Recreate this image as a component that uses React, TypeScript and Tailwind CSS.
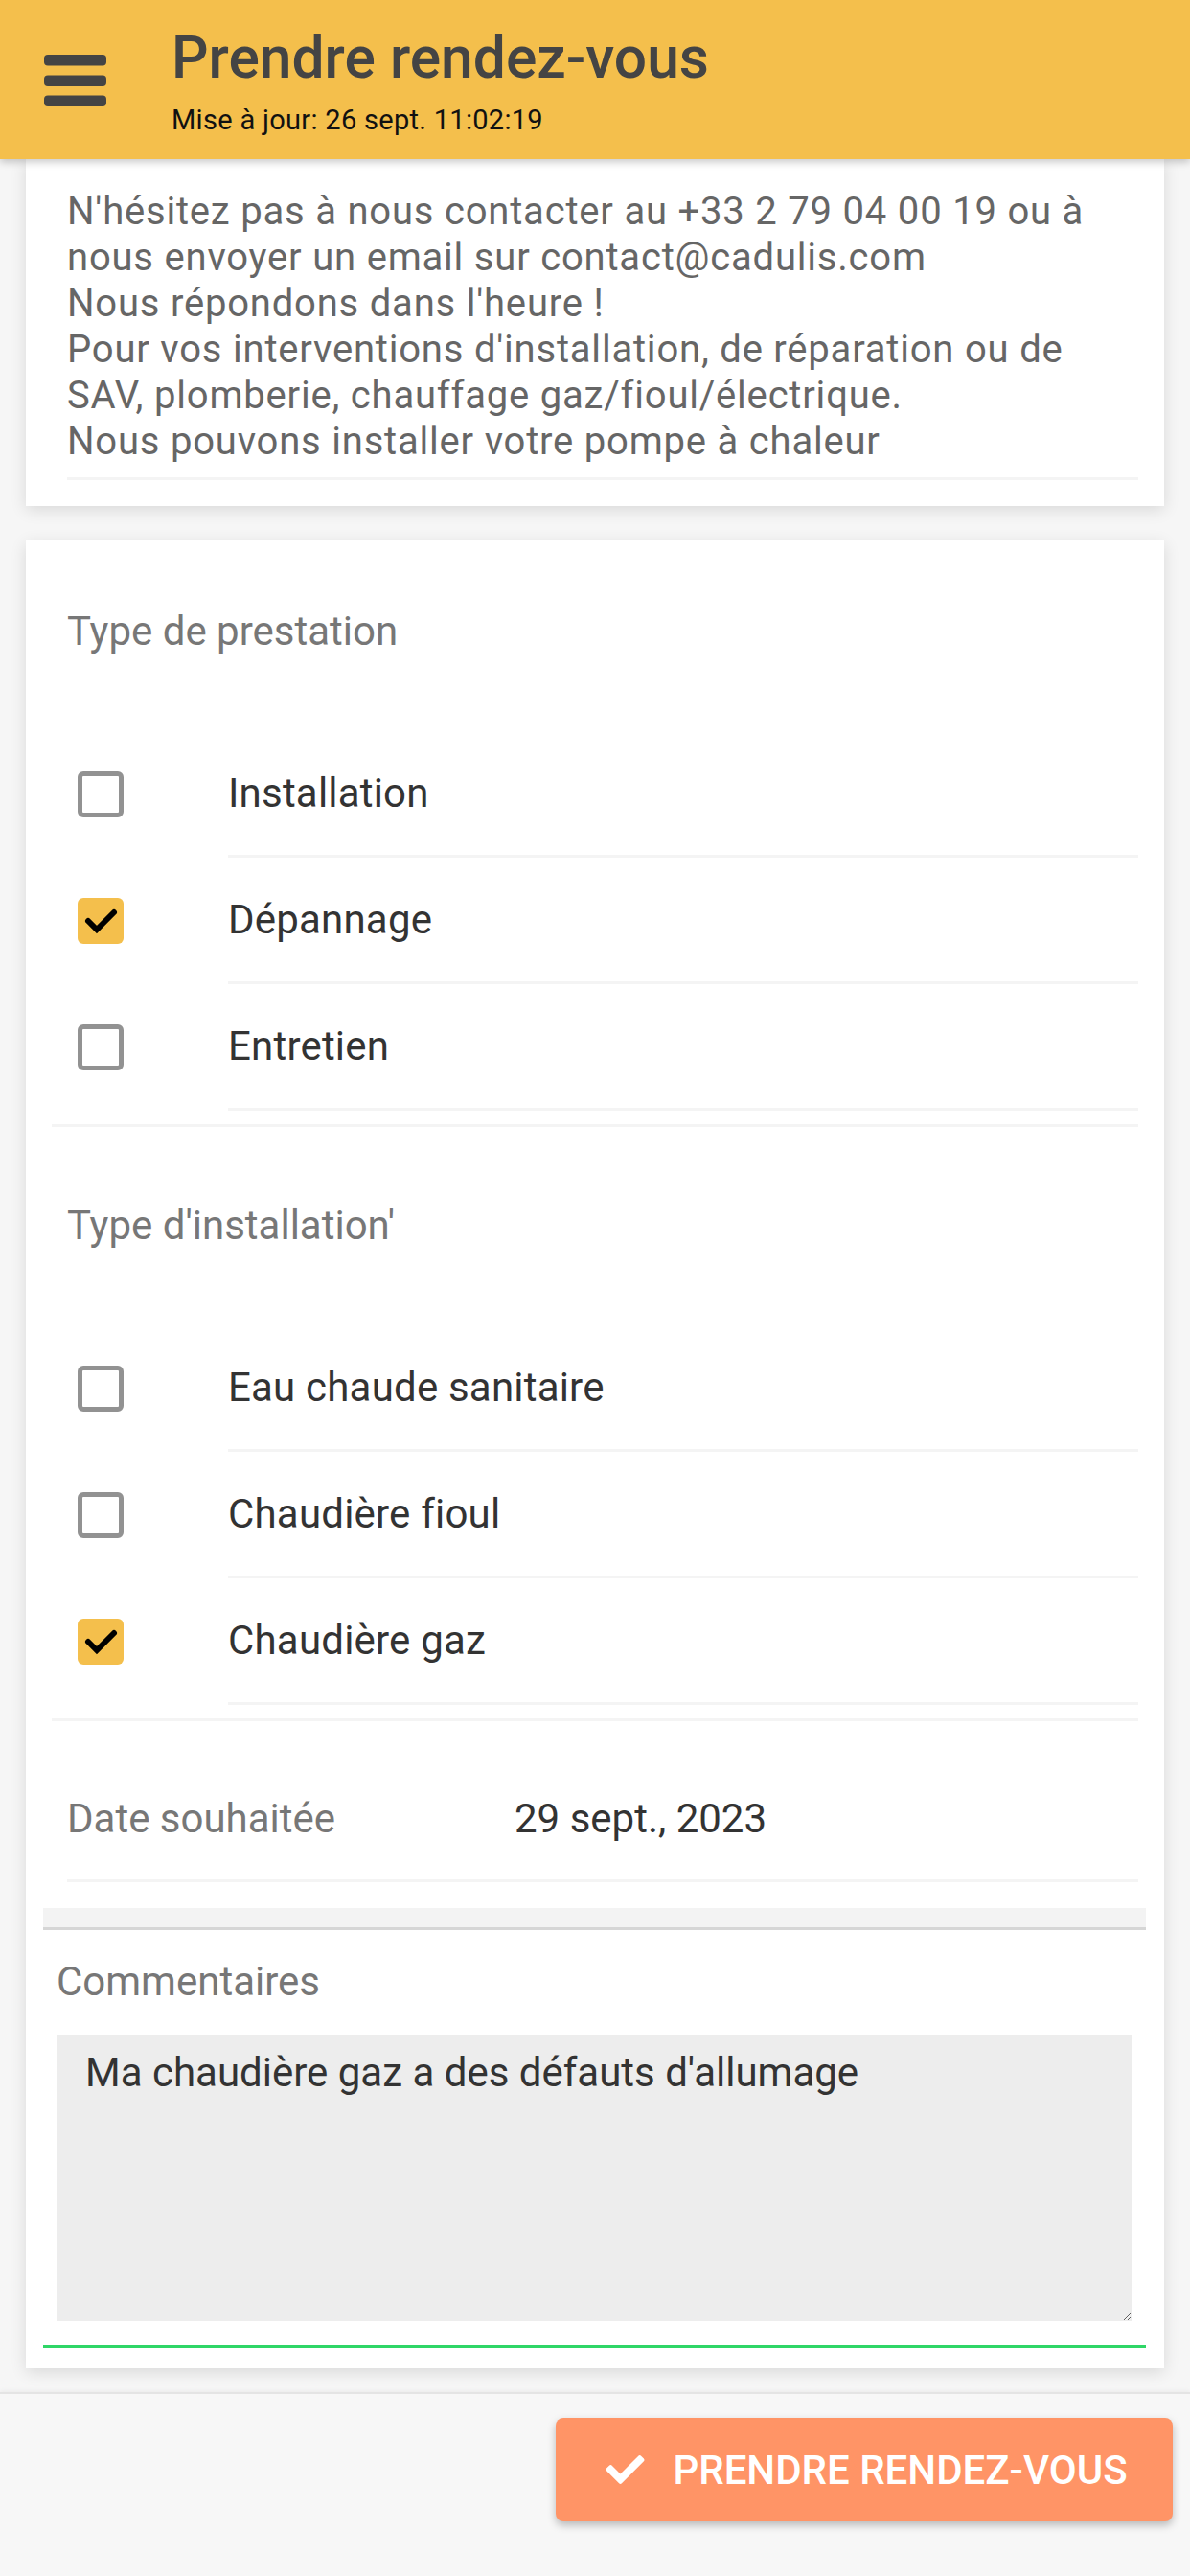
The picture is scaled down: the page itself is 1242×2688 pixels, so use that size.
import React from "react";
import { FaCheck } from "react-icons/fa";

const F = { fontFamily: "Roboto, 'Noto Sans', sans-serif" };

function Box({ checked }: { checked: boolean }) {
  if (checked) {
    return (
      <div className="w-[48px] h-[48px] rounded-[6px] bg-[#f4bf4c] flex items-center justify-center">
        <svg width="48" height="48" viewBox="0 0 48 48">
          <path d="M11 24 L20 33 L38 15" fill="none" stroke="#000" strokeWidth="6" strokeLinecap="round" strokeLinejoin="miter" />
        </svg>
      </div>
    );
  }
  return <div className="w-[48px] h-[48px] rounded-[6px] border-[5px] border-[#929292] bg-white" />;
}

function Row({ label, checked }: { label: string; checked: boolean }) {
  return (
    <div className="flex items-stretch pl-[16px]">
      <div className="w-[168px] flex items-center pl-[11px]">
        <Box checked={checked} />
      </div>
      <div className="flex-1 h-[132px] border-b-[3px] border-[#f4f4f4] flex items-center text-[42px] leading-[48px] tracking-[0.2px] text-[#333]">
        {label}
      </div>
    </div>
  );
}

function Section({ pt, label, rows }: { pt: string; label: string; rows: { label: string; checked: boolean }[] }) {
  return (
    <div className={pt}>
      <div className="px-[16px] text-[42px] leading-[48px] text-[#777]">{label}</div>
      <div className="mt-[80px]">
        {rows.map((r) => (
          <Row key={r.label} label={r.label} checked={r.checked} />
        ))}
      </div>
      <div className="mt-[14px] h-[3px] bg-[#f4f4f4]" />
    </div>
  );
}

export default function App() {
  return (
    <div style={F} className="w-[1242px] min-h-[2688px] bg-[#f6f6f6] flex flex-col">
      <header className="relative z-10 h-[166px] bg-[#f4bf4c] shadow-[0_3px_8px_rgba(0,0,0,0.22)] flex items-start pl-[46px]">
        <svg className="mt-[57px]" width="65" height="54" viewBox="0 0 65 54">
          <rect x="0" y="0" width="65" height="11.5" rx="4" fill="#444" />
          <rect x="0" y="21.5" width="65" height="11.5" rx="4" fill="#444" />
          <rect x="0" y="42.5" width="65" height="11.5" rx="4" fill="#444" />
        </svg>
        <div className="ml-[68px] pt-[26px] flex flex-col">
          <div className="text-[60.5px] leading-[70px] font-medium text-[#444]">Prendre rendez-vous</div>
          <div className="mt-[11px] text-[29px] leading-[36px] tracking-[0.3px] text-[#111]">Mise à jour: 26 sept. 11:02:19</div>
        </div>
      </header>

      <div className="mx-[27px] bg-white shadow-[0_4px_16px_rgba(0,0,0,0.12)] pl-[43px] pr-[27px] pt-[31px] pb-[27px]">
        <div className="text-[40px] leading-[48px] tracking-[0.8px] text-[#666] whitespace-nowrap">
          N'hésitez pas à nous contacter au +33 2 79 04 00 19 ou à<br />
          nous envoyer un email sur contact@cadulis.com<br />
          Nous répondons dans l'heure !<br />
          Pour vos interventions d'installation, de réparation ou de<br />
          SAV, plomberie, chauffage gaz/fioul/électrique.<br />
          Nous pouvons installer votre pompe à chaleur
        </div>
        <div className="mt-[13px] h-[3px] bg-[#f4f4f4]" />
      </div>

      <div className="mt-[36px] mx-[27px] bg-white shadow-[0_4px_16px_rgba(0,0,0,0.12)] pb-[21px]">
        <div className="px-[27px]">
          <Section
            pt="pt-[71px]"
            label="Type de prestation"
            rows={[
              { label: "Installation", checked: false },
              { label: "Dépannage", checked: true },
              { label: "Entretien", checked: false },
            ]}
          />
          <Section
            pt="pt-[79px]"
            label="Type d'installation'"
            rows={[
              { label: "Eau chaude sanitaire", checked: false },
              { label: "Chaudière fioul", checked: false },
              { label: "Chaudière gaz", checked: true },
            ]}
          />
          <div className="ml-[16px] pt-[78px] pb-[39px] border-b-[3px] border-[#f4f4f4] flex text-[42px] leading-[48px]">
            <div className="w-[467px] text-[#777]">Date souhaitée</div>
            <div className="text-[#333]">29 sept., 2023</div>
          </div>
        </div>

        <div className="ml-[18px] mr-[19px]">
          <div className="mt-[27px] h-[23px] bg-[#f3f3f3] border-b-[3px] border-[#d6d6d6]" />
          <div className="mt-[30px] pl-[14px] text-[42px] leading-[48px] text-[#777]">Commentaires</div>
          <div className="mt-[31px] mx-[15px]">
            <textarea
              readOnly
              defaultValue="Ma chaudière gaz a des défauts d'allumage"
              style={F}
              className="block w-full h-[299px] bg-[#ededed] pl-[29px] pr-[20px] pt-[16px] text-[42px] leading-[48px] text-[#333] outline-none resize-y"
            />
          </div>
          <div className="mt-[25px] h-[3px] bg-[#2fd667]" />
        </div>
      </div>

      <div className="mt-[25px] flex-1 bg-[#f7f7f7] border-t-[2px] border-[#e4e4e4] shadow-[0_-2px_4px_rgba(0,0,0,0.04)] flex justify-end items-start pt-[25px] pr-[18px]">
        <button className="w-[644px] h-[108px] rounded-[8px] bg-[#ff9466] shadow-[0_4px_8px_rgba(0,0,0,0.25)] flex items-center justify-center text-white text-[42px] font-medium">
          <FaCheck className="w-[51px] h-[40px]" />
          <span className="ml-[24px]">PRENDRE RENDEZ-VOUS</span>
        </button>
      </div>
    </div>
  );
}
